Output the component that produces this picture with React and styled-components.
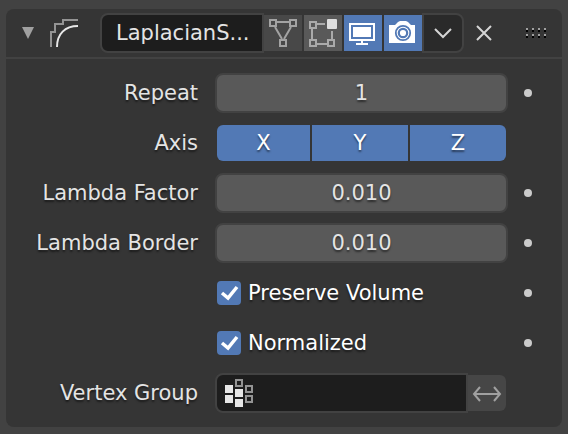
import React, { useState } from "react";
import styled, { createGlobalStyle } from "styled-components";

const font = `"DejaVu Sans", sans-serif`;
const blue = "#5279b5";
const outline = "#424242";

const GlobalStyle = createGlobalStyle`
  * { box-sizing: border-box; }
  body { margin: 0; background: #424242; font-family: ${font}; font-size: 21px; }
  button, input { font: inherit; margin: 0; padding: 0; border: 0; min-width: 0; }
  button { cursor: pointer; }
  svg { display: block; }
`;

const Page = styled.main`
  padding: 9px 6px 7px;
`;

const Panel = styled.section`
  border-radius: 8px;
  background: #353535;
`;

const Header = styled.header`
  display: flex;
  align-items: center;
  height: 50px;
  padding: 0 16px 0 14px;
  border-bottom: 2px solid ${outline};
`;

const IconButton = styled.button`
  display: grid;
  place-items: center;
  flex: none;
  width: ${(p) => p.$width}px;
  height: 36px;
  background: none;
`;

const TypeIcon = styled.span`
  flex: none;
  margin: 0 22px 0 14px;
`;

const ModifierControls = styled.div`
  display: flex;
  align-items: center;
  flex: 1;
  min-width: 0;
`;

const Toggles = styled.div`
  display: flex;
  gap: 2px;
`;

const ToggleButton = styled.button`
  flex: none;
  width: 38px;
  height: 36px;
  background: ${(p) => p.$fill};
`;

const TextField = styled.input`
  flex: 1;
  width: 100%;
  height: 40px;
  && {
    padding: 0 0 0 14px;
    border: 2px solid ${outline};
  }
  border-radius: 8px 0 0 8px;
  background: #1d1d1d;
  color: #e4e4e4;
`;

const MenuButton = styled.button`
  display: grid;
  place-items: center;
  width: 42px;
  height: 40px;
  && {
    border: 2px solid ${outline};
  }
  border-radius: 0 8px 8px 0;
  background: #2a2a2a;
`;

const Grip = styled.span`
  margin-left: 22px;
`;

const Body = styled.div`
  display: flex;
  flex-direction: column;
  gap: 10px;
  padding: 14px 30px 14px 0;
`;

const Row = styled.div`
  display: grid;
  grid-template-columns: 193px minmax(0, 1fr) 8px;
  column-gap: 16px;
  align-items: center;
  height: 40px;
`;

const Label = styled.label`
  grid-column: 1;
  padding-right: 1px;
  text-align: right;
  white-space: nowrap;
  color: #e4e4e4;
  text-shadow: 0 2px 2px rgba(0, 0, 0, 0.5);
`;

const NumberField = styled.input`
  width: 100%;
  height: 40px;
  && {
    border: 2px solid ${outline};
  }
  border-radius: 8px;
  background: #595959;
  color: #e4e4e4;
  text-align: center;
  text-shadow: 0 2px 2px rgba(0, 0, 0, 0.5);
`;

const AxisGroup = styled.div`
  display: grid;
  grid-template-columns: 93fr 96fr 96fr;
  gap: 2px;
  margin: 0 2px;
  border-radius: 6px;
  overflow: hidden;
`;

const AxisButton = styled.button`
  height: 36px;
  background: ${(p) => (p.$on ? blue : "#595959")};
  color: #fff;
  text-shadow: 0 2px 2px rgba(0, 0, 0, 0.5);
`;

const CheckLabel = styled.label`
  grid-column: 2;
  display: flex;
  align-items: center;
  gap: 7px;
  padding-left: 2px;
  white-space: nowrap;
  color: #fff;
  text-shadow: 0 2px 2px rgba(0, 0, 0, 0.5);
`;

const CheckBox = styled.span`
  display: grid;
  flex: none;
  width: 24px;
  height: 24px;

  > * { grid-area: 1 / 1; }
`;

const CheckInput = styled.input`
  appearance: none;
  width: 24px;
  height: 24px;
  border-radius: 4px;
  background: #595959;

  & + svg { visibility: hidden; pointer-events: none; }
  &:checked { background: ${blue}; }
  &:checked + svg { visibility: visible; }
`;

const KeyDot = styled.button`
  grid-column: 3;
  width: 8px;
  height: 8px;
  border-radius: 50%;
  background: #cbcbcb;
`;

const GroupControls = styled.div`
  display: flex;
  align-items: center;
  padding-right: 2px;
`;

const GroupPicker = styled.div`
  display: grid;
  flex: 1;
  align-items: center;

  > * { grid-area: 1 / 1; }
  > svg { z-index: 1; margin-left: 10px; pointer-events: none; }
`;

const GroupField = styled(TextField)`
  &&& { padding-left: 44px; }
`;

const SwapButton = styled.button`
  flex: none;
  width: 38px;
  height: 36px;
  border-radius: 0 6px 6px 0;
  background: #464646;
`;

const CageIcon = () => (
  <svg width="38" height="36" fill="none" stroke="#a3a3a3" strokeWidth="2">
    <path d="M6 5h6v6H6zM26 5h6v6h-6zM16 25h6v6h-6zM13 7h12M11 12l7 12M27 12l-7 12" />
  </svg>
);

const EditIcon = () => (
  <svg width="38" height="36" fill="none" stroke="#aaaaaa" strokeWidth="2">
    <path d="M6 7h6v6H6zM6 25h6v6H6zM24 25h6v6h-6zM13 9h8M8 14v10M13 29h10M28 16v8" />
    <rect x="23" y="4" width="10" height="10" rx="1" fill="#dedede" stroke="none" />
  </svg>
);

const ScreenIcon = () => (
  <svg width="38" height="36" fill="#fff">
    <path d="M6 9h24v16H6z" fill="none" stroke="#fff" strokeWidth="2" />
    <path d="M9 12h18v10H9zM17 26h2v2h5v2H12v-2h5z" />
  </svg>
);

const CameraIcon = () => (
  <svg width="38" height="36">
    <path d="M5 10h6l3-3 2-1h6l2 1 3 3h4v18H5z" fill="#fff" />
    <circle cx="19" cy="18" r="7.2" fill="none" stroke={blue} strokeWidth="1.8" />
    <circle cx="19" cy="18" r="4.2" fill="none" stroke={blue} strokeWidth="2.2" />
  </svg>
);

const SmoothIcon = () => (
  <svg width="28" height="28" fill="none" strokeWidth="2">
    <path d="M1 28V13h4V5h8V1h15" stroke="#949494" />
    <path d="M7 28C7 15 15 7 28 7" stroke="#e8e8e8" />
  </svg>
);

const VertexIcon = () => (
  <svg width="28" height="28">
    <path d="M0 6h8v8H0zM0 16h8v8H0zM10 10h8v8h-8zM10 20h8v8h-8z" fill="#e6e6e6" />
    <path d="M11 1h6v6h-6zM21 7h6v6h-6zM21 17h6v6h-6z" fill="none" stroke="#949494" strokeWidth="2" />
  </svg>
);

const gripColumns = [0, 6, 12, 18];

function PropertyNumber({ id, label, initial }) {
  const [value, setValue] = useState(initial);
  return (
    <Row>
      <Label htmlFor={id}>{label}</Label>
      <NumberField id={id} inputMode="decimal" value={value} onChange={(e) => setValue(e.target.value)} />
      <KeyDot aria-label={`Animate ${label}`} />
    </Row>
  );
}

function PropertyCheck({ label }) {
  return (
    <Row>
      <CheckLabel>
        <CheckBox>
          <CheckInput type="checkbox" defaultChecked />
          <svg width="24" height="24" fill="none" stroke="#fff" strokeWidth="3.5">
            <path d="M5 12l6 5L20 6" />
          </svg>
        </CheckBox>
        {label}
      </CheckLabel>
      <KeyDot aria-label={`Animate ${label}`} />
    </Row>
  );
}

export default function App() {
  const [axes, setAxes] = useState({ X: true, Y: true, Z: true });
  return (
    <Page>
      <GlobalStyle />
      <Panel>
        <Header>
          <IconButton $width={16} aria-label="Collapse panel">
            <svg width="12" height="12" fill="#a0a0a0"><path d="M0 0h12L6 12z" /></svg>
          </IconButton>
          <TypeIcon>
            <SmoothIcon />
          </TypeIcon>
          <ModifierControls>
            <TextField aria-label="Modifier name" defaultValue="LaplacianS..." />
            <Toggles>
              <ToggleButton $fill="#484848" aria-label="On cage"><CageIcon /></ToggleButton>
              <ToggleButton $fill="#595959" aria-label="Edit mode"><EditIcon /></ToggleButton>
              <ToggleButton $fill={blue} aria-label="Realtime"><ScreenIcon /></ToggleButton>
              <ToggleButton $fill={blue} aria-label="Render"><CameraIcon /></ToggleButton>
            </Toggles>
            <MenuButton aria-label="Modifier menu">
              <svg width="18" height="12" fill="none" stroke="#d5d5d5" strokeWidth="2">
                <path d="M1 2l8 8 8-8" />
              </svg>
            </MenuButton>
          </ModifierControls>
          <IconButton $width={40} aria-label="Remove modifier">
            <svg width="16" height="16" fill="none" stroke="#d5d5d5" strokeWidth="2">
              <path d="M1 1l14 14M15 1L1 15" />
            </svg>
          </IconButton>
          <Grip>
            <svg width="20" height="10">
              {gripColumns.map((x) => (
                <g key={x}>
                  <path d={`M${x} 0h2v2h-2zM${x} 6h2v2h-2z`} fill="#a0a0a0" />
                  <path d={`M${x} 2h2v2h-2zM${x} 8h2v2h-2z`} fill="#000" />
                </g>
              ))}
            </svg>
          </Grip>
        </Header>
        <Body>
          <PropertyNumber id="repeat" label="Repeat" initial="1" />
          <Row>
            <Label as="span" id="axis-label">Axis</Label>
            <AxisGroup role="group" aria-labelledby="axis-label">
              {Object.keys(axes).map((axis) => (
                <AxisButton
                  key={axis}
                  $on={axes[axis]}
                  aria-pressed={axes[axis]}
                  onClick={() => setAxes({ ...axes, [axis]: !axes[axis] })}
                >
                  {axis}
                </AxisButton>
              ))}
            </AxisGroup>
          </Row>
          <PropertyNumber id="factor" label="Lambda Factor" initial="0.010" />
          <PropertyNumber id="border" label="Lambda Border" initial="0.010" />
          <PropertyCheck label="Preserve Volume" />
          <PropertyCheck label="Normalized" />
          <Row>
            <Label htmlFor="vertex-group">Vertex Group</Label>
            <GroupControls>
              <GroupPicker>
                <VertexIcon />
                <GroupField id="vertex-group" />
              </GroupPicker>
              <SwapButton aria-label="Invert vertex group">
                <svg width="38" height="36" fill="none" stroke="#a0a0a0" strokeWidth="2">
                  <path d="M6 19h26M12 12l-6 7 6 7M26 12l6 7-6 7" />
                </svg>
              </SwapButton>
            </GroupControls>
          </Row>
        </Body>
      </Panel>
    </Page>
  );
}
